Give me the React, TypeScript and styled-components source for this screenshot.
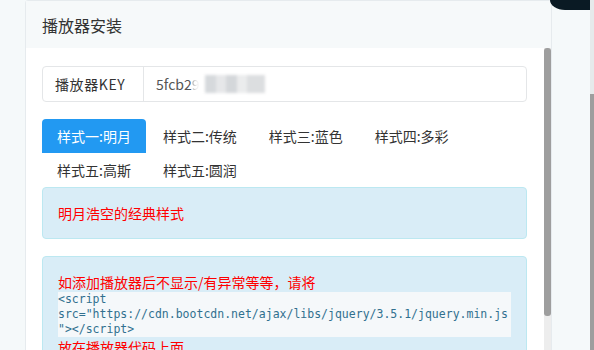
import React from 'react';
import styled, { createGlobalStyle } from 'styled-components';

const GlobalStyle = createGlobalStyle`
    html, body {
        margin: 0;
        padding: 0;
        height: 350px;
        overflow: hidden;
        background: #f5f9fa;
        font-family: "Noto Sans CJK SC", "Noto Sans", sans-serif;
        color: #333;
    }
    * {
        box-sizing: border-box;
    }
`;

const tabs = ['样式一:明月', '样式二:传统', '样式三:蓝色', '样式四:多彩', '样式五:高斯', '样式五:圆润'];

const App = () => {
    return (
        <>
            <GlobalStyle />
            <Page>
                <Main>
                    <Card>
                        <CardHeader>播放器安装</CardHeader>
                        <CardBody>
                            <BodyContent>
                                <InputGroup>
                                    <InputLabel>播放器KEY</InputLabel>
                                    <InputValue>
                                        5fcb2<Faded>9</Faded><Masked />
                                    </InputValue>
                                </InputGroup>
                                <TabBar>
                                    {tabs.map((t, i) => (
                                        <Tab key={i} $active={i === 0}>{t}</Tab>
                                    ))}
                                </TabBar>
                                <Alert>
                                    <RedText>明月浩空的经典样式</RedText>
                                </Alert>
                                <Alert $spaced>
                                    <RedText>如添加播放器后不显示/有异常等等，请将</RedText>
                                    <Code>{'<script\nsrc="https://cdn.bootcdn.net/ajax/libs/jquery/3.5.1/jquery.min.js\n"></script>'}</Code>
                                    <RedText>放在播放器代码上面</RedText>
                                </Alert>
                            </BodyContent>
                            <ScrollTrack>
                                <ScrollThumb $height={268} />
                            </ScrollTrack>
                        </CardBody>
                    </Card>
                    <Floating />
                </Main>
                <PageScroll>
                    <PageThumb />
                </PageScroll>
            </Page>
        </>
    );
};

const Page = styled.div`
    display: flex;
    height: 350px;
`

const Main = styled.div`
    position: relative;
    flex: 1;
    padding: 0 38px 0 25px;
    overflow: hidden;
`

const Floating = styled.div`
    position: absolute;
    top: 0;
    right: 0;
    width: 40px;
    height: 10px;
    background: #0a1a24;
    border-bottom-left-radius: 18px 12px;
`

const Card = styled.div`
    display: flex;
    flex-flow: column;
    border: 1px solid #e6ebee;
    border-radius: 3px;
    background: #fff;
`

const CardHeader = styled.div`
    height: 47px;
    display: flex;
    align-items: center;
    padding-left: 16px;
    background: #f6f9fa;
    font-size: 16px;
    color: #333;
`

const CardBody = styled.div`
    display: flex;
    height: 320px;
    overflow: hidden;
`

const BodyContent = styled.div`
    flex: 1;
    padding: 18px 17px 0 16px;
`

const ScrollTrack = styled.div`
    width: 7px;
    flex-shrink: 0;
    background: #ededed;
`

const ScrollThumb = styled.div<{ $height: number }>`
    height: ${p => p.$height}px;
    background: #9e9e9e;
    border-radius: 3px;
`

const InputGroup = styled.div`
    display: flex;
    height: 36px;
    border: 1px solid #e4e6e8;
    border-radius: 4px;
`

const InputLabel = styled.div`
    width: 101px;
    display: flex;
    align-items: center;
    padding-left: 12px;
    border-right: 1px solid #e4e6e8;
    font-size: 14px;
    letter-spacing: 0.6px;
    color: #333;
`

const InputValue = styled.div`
    display: flex;
    align-items: center;
    padding-left: 12px;
    font-size: 14px;
    color: #555;
`

const Faded = styled.span`
    opacity: 0.45;
`

const Masked = styled.span`
    display: inline-block;
    width: 70px;
    height: 18px;
    margin-left: -5px;
    background: linear-gradient(to right,
        rgba(255,255,255,0.85) 0 14%,
        #d6d9dc 14% 30%,
        #e6e7e9 30% 44%,
        #d4d7da 44% 60%,
        #ebeced 60% 74%,
        #dcdee0 74% 100%);
    filter: blur(1.5px);
`

const TabBar = styled.div`
    display: flex;
    flex-wrap: wrap;
    column-gap: 2px;
    margin-top: 17px;
`

const Tab = styled.div<{ $active?: boolean }>`
    height: 34px;
    line-height: 34px;
    padding: 0 15px;
    font-size: 14px;
    border-radius: 4px 4px 0 0;
    background: ${p => (p.$active ? '#2299f2' : 'transparent')};
    color: ${p => (p.$active ? '#fff' : '#333')};
`

const Alert = styled.div<{ $spaced?: boolean }>`
    margin-top: ${p => (p.$spaced ? '17px' : '0')};
    padding: 15px;
    background: #d9edf7;
    border: 1px solid #bce8f1;
    border-radius: 4px;
    color: #31708f;
    font-size: 14px;
    line-height: 20px;
`

const RedText = styled.div`
    color: #ff0000;
`

const Code = styled.pre`
    margin: 0;
    padding: 0;
    background: #f5f8fa;
    font-family: "DejaVu Sans Mono", monospace;
    font-size: 11.5px;
    line-height: 15px;
    color: #31708f;
    white-space: pre;
`

const PageScroll = styled.div`
    width: 4px;
    background: #e6eaeb;
    display: flex;
    flex-flow: column;
`

const PageThumb = styled.div`
    margin-top: 94px;
    flex: 1;
    background: #9e9e9e;
`

export default App;
